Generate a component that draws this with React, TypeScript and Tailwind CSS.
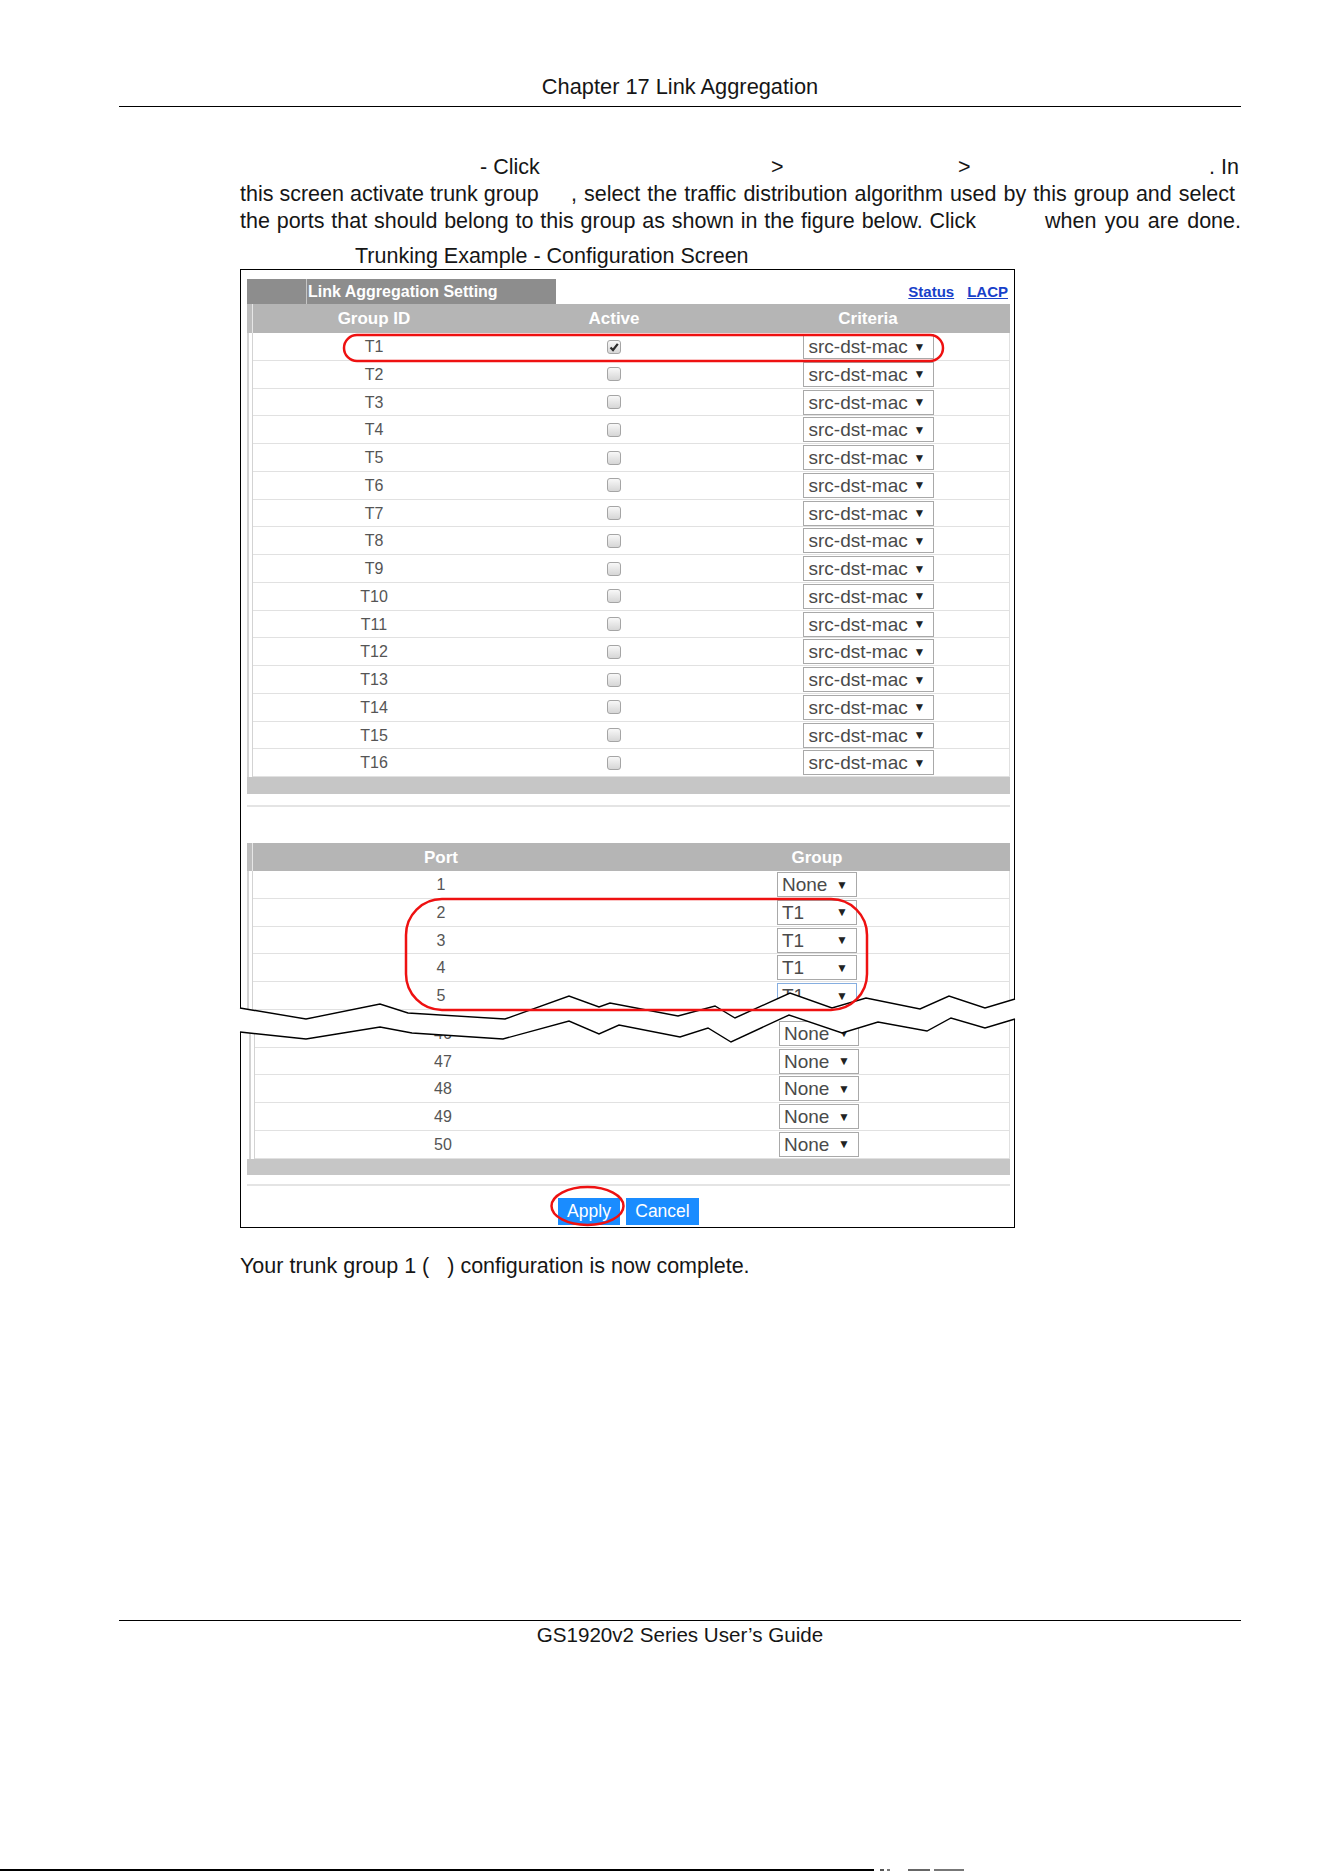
import clsx from "clsx";

const trunks = Array.from({ length: 16 }, (_, i) => `T${i + 1}`);

const firstPorts = [
  { port: 1, group: "None", focus: false },
  { port: 2, group: "T1", focus: false },
  { port: 3, group: "T1", focus: false },
  { port: 4, group: "T1", focus: false },
  { port: 5, group: "T1", focus: true },
];
const lastPorts = [46, 47, 48, 49, 50];

// torn-edge lines that cut the port list (page coordinates)
const upperEdge =
  "240,1008 306,1019 380,1004 408,1013 505,1019 569,996 599,1007 610,1003 678,1016 715,1006 735,1018 790,993 832,1008 866,998 920,1009 949,996 985,1008 1015,999";
const lowerEdge =
  "240,1032 306,1039 380,1027 412,1033 503,1039 569,1021 599,1034 619,1025 680,1037 708,1028 731,1042 789,1015 842,1033 878,1022 927,1031 951,1018 985,1028 1015,1019";
const tornBand = `${upperEdge} ${lowerEdge.split(" ").reverse().join(" ")}`;

function Gutter({ head = false }: { head?: boolean }) {
  if (head) {
    return (
      <div className="flex w-[6px] shrink-0">
        <div className="w-[5px] bg-[#bdbdbd]" />
        <div className="w-px bg-[#e6e6e6]" />
      </div>
    );
  }
  return (
    <div className="flex w-[6px] shrink-0">
      <div className="w-[2px] bg-[#d3d3d3]" />
      <div className="w-[3px] bg-white" />
      <div className="w-px bg-[#d3d3d3]" />
    </div>
  );
}

function CheckBox({ checked = false }: { checked?: boolean }) {
  return (
    <span className="mx-auto flex h-[14px] w-[14px] items-center justify-center rounded-[3px] border border-[#a5a5a5] bg-linear-to-b from-[#f8f8f8] to-[#d6d6d6]">
      {checked && (
        <svg width="12" height="12" viewBox="0 0 12 12">
          <path d="M2.5 6.5 L5 9 L9.8 2.8" fill="none" stroke="#2b2b2b" strokeWidth="2.2" />
        </svg>
      )}
    </span>
  );
}

function Dropdown({
  value,
  wide = false,
  focus = false,
}: {
  value: string;
  wide?: boolean;
  focus?: boolean;
}) {
  return (
    <div
      className={clsx(
        "flex h-[25px] items-center border bg-white text-[19px] leading-none text-[#4a4a4a]",
        wide ? "w-[131px] pl-[5px] pr-[7px]" : "w-[80px] pl-[4px] pr-[8px]",
        focus ? "border-[#86aee0]" : "border-[#a9a9a9]"
      )}
    >
      <span className="flex-1">{value}</span>
      <span className="text-[12px] text-[#222]">▼</span>
    </div>
  );
}

function PortRow({ port, group, focus = false, shifted = false }: { port: number; group: string; focus?: boolean; shifted?: boolean }) {
  return (
    <div className={clsx("flex h-[27.75px]", shifted && "ml-[2px]")}>
      <Gutter />
      <div className="grid flex-1 grid-cols-[376px_376px_1fr] items-center border-b border-r border-[#e1e1e1] text-[16px] text-[#555]">
        <span className="text-center">{port}</span>
        <div className="flex justify-center">
          <Dropdown value={group} focus={focus} />
        </div>
      </div>
    </div>
  );
}

function LinkAggregationFigure() {
  return (
    <div className="w-[775px] border border-black pb-[2px] pl-[6px] pr-[4px] pt-[9px]">
      {/* title tab + links */}
      <div className="flex h-[25px] items-end justify-between">
        <div className="flex h-[25px] w-[309px] bg-[#8d8d8d]">
          <div className="w-[59px]" />
          <div className="w-px bg-[#c6c6c6]" />
          <span className="pl-[1px] text-[16px] font-bold leading-[25px] text-white">Link Aggregation Setting</span>
        </div>
        <div className="flex gap-[13px] pb-[5px] pr-[2px] text-[15px] font-bold leading-none text-[#1740c9] underline">
          <span>Status</span>
          <span>LACP</span>
        </div>
      </div>

      {/* trunk groups */}
      <div className="flex h-[29px] bg-[#b5b5b5] text-[17px] font-bold text-white">
        <Gutter head />
        <div className="grid flex-1 grid-cols-[242px_238px_270px] items-center text-center">
          <span>Group ID</span>
          <span>Active</span>
          <span>Criteria</span>
        </div>
      </div>
      {trunks.map((t, i) => (
        <div key={t} className="flex h-[27.75px]">
          <Gutter />
          <div className="grid flex-1 grid-cols-[242px_238px_270px_1fr] items-center border-b border-r border-[#e1e1e1] text-[16px] text-[#555]">
            <span className="text-center">{t}</span>
            <CheckBox checked={i === 0} />
            <div className="flex justify-center">
              <Dropdown value="src-dst-mac" wide />
            </div>
          </div>
        </div>
      ))}
      <div className="h-[17px] bg-[#c6c6c6]" />
      <div className="mt-[11px] h-[2px] bg-[#e4e4e4]" />

      {/* port membership */}
      <div className="mt-[36px] flex h-[28px] bg-[#b5b5b5] text-[17px] font-bold text-white">
        <Gutter head />
        <div className="grid flex-1 grid-cols-[376px_376px] items-center text-center">
          <span>Port</span>
          <span>Group</span>
        </div>
      </div>
      {firstPorts.map((p) => (
        <PortRow key={p.port} port={p.port} group={p.group} focus={p.focus} />
      ))}
      <div className="flex h-[10px]">
        <Gutter />
        <div className="flex-1 border-r border-[#e1e1e1]" />
      </div>
      {lastPorts.map((n) => (
        <PortRow key={n} port={n} group="None" shifted />
      ))}
      <div className="h-[16.5px] bg-[#c6c6c6]" />
      <div className="mt-[9px] h-[2px] bg-[#e4e4e4]" />

      <div className="mt-[12px] flex h-[27px] justify-center gap-[6px] text-[17.5px] leading-none text-white">
        <span className="flex w-[62px] items-center justify-center bg-[#1a8cff] pt-[1px]">Apply</span>
        <span className="flex w-[73px] items-center justify-center bg-[#1a8cff] pt-[1px]">Cancel</span>
      </div>
    </div>
  );
}

export default function App() {
  return (
    <div className="relative flex h-[1872px] w-[1324px] flex-col overflow-hidden bg-white font-['Liberation_Sans',Arial,sans-serif] text-[#161616]">
      <div className="ml-[119px] w-[1122px]">
        <div className="pt-[74px] text-center text-[21.8px] leading-[26px]">Chapter 17 Link Aggregation</div>
        <div className="mt-[6px] h-px bg-black" />

        <div className="ml-[121px] mt-[47px] w-[1001px] text-[21.5px] leading-[27px]">
          <div className="flex h-[27px]">
            <span className="ml-[240px] w-[291px]">- Click</span>
            <span className="w-[187px]">&gt;</span>
            <span className="w-[251px]">&gt;</span>
            <span>. In</span>
          </div>
          <div className="flex h-[27px]">
            <span className="w-[331px] shrink-0">this screen activate trunk group</span>
            <span className="w-[664px] [text-align-last:justify]">
              , select the traffic distribution algorithm used by this group and select
            </span>
          </div>
          <div className="flex h-[27px]">
            <span className="w-[736px] shrink-0 [text-align-last:justify]">
              the ports that should belong to this group as shown in the figure below. Click
            </span>
            <span className="ml-[69px] w-[196px] [text-align-last:justify]">when you are done.</span>
          </div>

          <div className="ml-[115px] mt-[8px] h-[26px]">Trunking Example - Configuration Screen</div>

          <LinkAggregationFigure />

          <p className="mt-[25px] h-[27px]">
            Your trunk group 1 (<span className="inline-block w-[18px]" />) configuration is now complete.
          </p>
        </div>

        <div className="mt-[340px] h-px bg-black" />
        <div className="text-center text-[20.6px] leading-[27px]">GS1920v2 Series User’s Guide</div>
      </div>

      <div className="mb-px mt-auto flex h-[2px]">
        <div className="w-[874px] bg-black" />
        <div className="ml-[6px] w-[4px] bg-[#555]" />
        <div className="ml-[3px] w-[3px] bg-[#777]" />
        <div className="ml-[18px] w-[22px] bg-[#666]" />
        <div className="ml-[4px] w-[30px] bg-[#777]" />
      </div>

      <svg
        className="pointer-events-none absolute left-0 top-0"
        width="1324"
        height="1872"
        viewBox="0 0 1324 1872"
      >
        <polygon points={tornBand} fill="#fff" />
        <polyline points={upperEdge} fill="none" stroke="#000" strokeWidth="1.4" />
        <polyline points={lowerEdge} fill="none" stroke="#000" strokeWidth="1.4" />
        <rect x="344" y="335" width="599" height="26" rx="13" fill="none" stroke="#ee1111" strokeWidth="2.5" />
        <rect x="406" y="899" width="461" height="111" rx="36" fill="none" stroke="#ee1111" strokeWidth="2.5" />
        <ellipse cx="587.5" cy="1206" rx="36" ry="19" fill="none" stroke="#ee1111" strokeWidth="2.5" />
      </svg>
    </div>
  );
}
